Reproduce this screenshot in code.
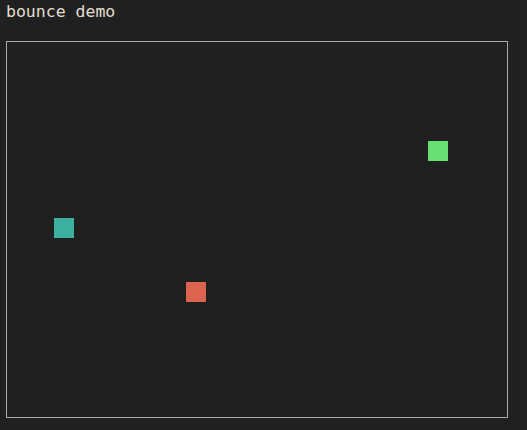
export default function App() {
  return (
    <div className="min-h-[430px] w-[527px] bg-[#202020] px-[6px] pt-[3px]">
      <div className="font-['DejaVu_Sans_Mono',monospace] text-[16.5px] leading-[18px] text-[#e4ddd0]">bounce demo</div>
      <div className="relative mt-[20px] h-[377px] w-[502px] border border-[#a9a9a9] bg-[#202020]">
        <div className="absolute left-[421px] top-[99px] h-[20px] w-[20px] bg-[#66e071]" />
        <div className="absolute left-[47px] top-[176px] h-[20px] w-[20px] bg-[#3bb1a0]" />
        <div className="absolute left-[179px] top-[240px] h-[20px] w-[20px] bg-[#dc644f]" />
      </div>
    </div>
  );
}
